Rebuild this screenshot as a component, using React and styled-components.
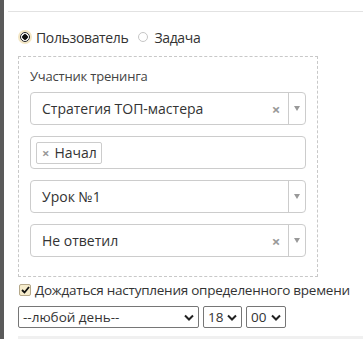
import styled, { createGlobalStyle } from "styled-components";

const Global = createGlobalStyle`
  html, body { margin: 0; padding: 0; background: #fff; }
  body { font-family: "Open Sans", "Liberation Sans", sans-serif; color: #333; }
`;

const Page = styled.div`
  display: flex;
  width: 363px;
  height: 339px;
  overflow: hidden;
`;

const SideStrip = styled.div`
  width: 4px;
  flex: none;
  background: #5a5a5a;
`;

const Main = styled.div`
  flex: 1;
  display: flex;
  flex-direction: column;
  overflow: hidden;
`;

const TopRule = styled.div`
  flex: none;
  height: 11px;
  margin-left: 4px;
  border-bottom: 1px solid #e2e2e2;
`;

const Content = styled.div`
  flex: none;
  padding: 17px 0 0 14px;
  display: flex;
  flex-direction: column;
`;

const RadioRow = styled.div`
  display: flex;
  align-items: center;
  height: 16px;
  font-size: 14px;
  letter-spacing: -0.35px;
  color: #333;
`;

const RadioLabel = styled.label`
  display: flex;
  align-items: center;
  margin-right: 8px;
`;

const RadioDot = styled.span`
  width: 10px;
  height: 10px;
  border-radius: 50%;
  margin: 0 6px 0 2px;
  box-sizing: border-box;
  border: 1px solid ${(p) => (p.checked ? "#222" : "#c6c6c6")};
  background: ${(p) => (p.checked ? "radial-gradient(circle, #111 0 2.5px, #fff 3px)" : "#fff")};
  box-shadow: ${(p) => (p.checked ? "0 0 0 2px #f3e6c4" : "none")};
`;

const DashedBox = styled.div`
  flex: none;
  margin-top: 11px;
  width: 300px;
  height: 221px;
  box-sizing: border-box;
  border: 1px dashed #c8c8c8;
  padding: 12px 11px 0 11px;
  display: flex;
  flex-direction: column;
  gap: 11px;
`;

const GroupLabel = styled.div`
  font-size: 13px;
  color: #444;
  height: 14px;
  line-height: 14px;
  margin-bottom: -2px;
  letter-spacing: -0.2px;
`;

const Select = styled.div`
  flex: none;
  display: flex;
  align-items: center;
  height: 33px;
  box-sizing: border-box;
  border: 1px solid #cccccc;
  border-radius: 4px;
  background: #fff;
  font-size: 14px;
  color: #333;
`;

const SelectValue = styled.div`
  flex: 1;
  padding-left: 11px;
`;

const ClearX = styled.span`
  width: 18px;
  font-size: 15px;
  font-weight: bold;
  color: #999;
  text-align: center;
  margin-right: 3px;
`;

const ArrowZone = styled.div`
  width: 16px;
  height: 100%;
  border-left: 1px solid #cccccc;
  display: flex;
  align-items: center;
  justify-content: center;
  &::after {
    content: "";
    border-left: 3px solid transparent;
    border-right: 3px solid transparent;
    border-top: 5px solid #999;
  }
`;

const TagBox = styled(Select)`
  padding-left: 5px;
`;

const Tag = styled.span`
  display: inline-flex;
  align-items: center;
  height: 22px;
  box-sizing: border-box;
  border: 1px solid #cccccc;
  border-radius: 2px;
  padding: 0 4px 0 5px;
  font-size: 14px;
  & b {
    color: #999;
    font-size: 13px;
    margin-right: 5px;
  }
`;

const CheckRow = styled.label`
  display: flex;
  align-items: center;
  margin-top: 5px;
  height: 16px;
  font-size: 13.5px;
  color: #333;
  letter-spacing: -0.25px;
`;

const CheckBox = styled.span`
  width: 12px;
  height: 12px;
  box-sizing: border-box;
  border: 1px solid #b5a88a;
  border-radius: 2px;
  background: #f6eccc;
  margin: 0 4px 0 1px;
  display: flex;
  align-items: center;
  justify-content: center;
`;

const TimeRow = styled.div`
  display: flex;
  gap: 4px;
  margin-top: 8px;
`;

const NativeSelect = styled.div`
  width: ${(p) => p.w}px;
  height: 22px;
  box-sizing: border-box;
  border: 1px solid #767676;
  border-radius: 2px;
  display: flex;
  align-items: center;
  justify-content: space-between;
  padding: 0 4px 0 4px;
  font-size: 13.5px;
  color: #333;
`;

const BottomBand = styled.div`
  flex: none;
  margin-top: 8px;
  height: 6px;
  background: #f0f0f0;
`;

const Chevron = () => (
  <svg width="10" height="7" viewBox="0 0 10 7">
    <path d="M1 1.5 L5 5.5 L9 1.5" fill="none" stroke="#222" strokeWidth="2" />
  </svg>
);

const Field = ({ value, clear }) => (
  <Select>
    <SelectValue>{value}</SelectValue>
    {clear && <ClearX>×</ClearX>}
    <ArrowZone />
  </Select>
);

export default function App() {
  return (
    <Page>
      <Global />
      <SideStrip />
      <Main>
        <TopRule />
        <Content>
          <RadioRow>
            <RadioLabel>
              <RadioDot checked />
              Пользователь
            </RadioLabel>
            <RadioLabel>
              <RadioDot />
              Задача
            </RadioLabel>
          </RadioRow>
          <DashedBox>
            <GroupLabel>Участник тренинга</GroupLabel>
            <Field value="Стратегия ТОП-мастера" clear />
            <TagBox>
              <Tag>
                <b>×</b>Начал
              </Tag>
            </TagBox>
            <Field value="Урок №1" />
            <Field value="Не ответил" clear />
          </DashedBox>
          <CheckRow>
            <CheckBox>
              <svg width="9" height="8" viewBox="0 0 9 8">
                <path d="M1 4 L3.5 6.5 L8 1" fill="none" stroke="#111" strokeWidth="1.8" />
              </svg>
            </CheckBox>
            Дождаться наступления определенного времени
          </CheckRow>
          <TimeRow>
            <NativeSelect w={181}>
              --любой день--
              <Chevron />
            </NativeSelect>
            <NativeSelect w={39}>
              18
              <Chevron />
            </NativeSelect>
            <NativeSelect w={40}>
              00
              <Chevron />
            </NativeSelect>
          </TimeRow>
          <BottomBand />
        </Content>
      </Main>
    </Page>
  );
}
